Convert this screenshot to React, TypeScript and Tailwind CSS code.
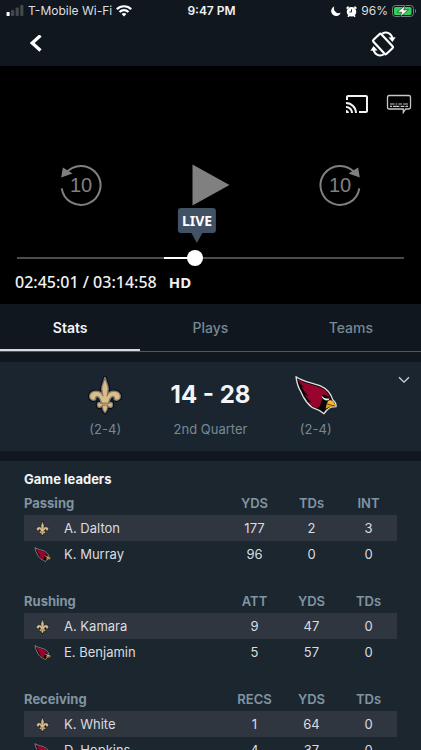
import React, { useState } from "react";
import { MdCast } from "react-icons/md";

type Leader = {
  team: "saints" | "cardinals";
  name: string;
  values: number[];
};

type Category = {
  title: string;
  columns: string[];
  leaders: Leader[];
};

const categories: Category[] = [
  {
    title: "Passing",
    columns: ["YDS", "TDs", "INT"],
    leaders: [
      { team: "saints", name: "A. Dalton", values: [177, 2, 3] },
      { team: "cardinals", name: "K. Murray", values: [96, 0, 0] },
    ],
  },
  {
    title: "Rushing",
    columns: ["ATT", "YDS", "TDs"],
    leaders: [
      { team: "saints", name: "A. Kamara", values: [9, 47, 0] },
      { team: "cardinals", name: "E. Benjamin", values: [5, 57, 0] },
    ],
  },
  {
    title: "Receiving",
    columns: ["RECS", "YDS", "TDs"],
    leaders: [
      { team: "saints", name: "K. White", values: [1, 64, 0] },
      { team: "cardinals", name: "D. Hopkins", values: [4, 37, 0] },
    ],
  },
];

const tabs = ["Stats", "Plays", "Teams"];

const FleurDeLis = ({ className }: { className?: string }) => {
  const shape =
    "M78 20 C76 34 69 42 69 54 C69 62 72 68 72 77 C69 68 61 62 50 62 C38 62 31 70 32 79 C33 87 42 91 49 86 C47 81 49 77 54 77 C63 78 65 89 68 98 L64 99 C61 95 55 97 56 102 C55 108 59 112 64 109 L71 107 C71 114 72 120 78 126 C84 120 85 114 85 107 L92 109 C97 112 101 108 100 102 C101 97 95 95 92 99 L88 98 C91 89 93 78 102 77 C107 77 109 81 107 86 C114 91 123 87 124 79 C125 70 118 62 106 62 C95 62 87 68 84 77 C84 68 87 62 87 54 C87 42 80 34 78 20 Z";
  return (
    <svg viewBox="26 12 104 122" className={className} aria-hidden="true">
      <path d={shape} fill="#080b0f" stroke="#080b0f" strokeWidth="12" strokeLinejoin="round" />
      <path d={shape} fill="#d7bc8a" stroke="#85827f" strokeWidth="6" strokeLinejoin="round" />
      <path d={shape} fill="#d9be8b" stroke="#3a3328" strokeWidth="1" />
      <path d="M67 98 H89 M67 104 H89" stroke="#4a3d29" strokeWidth="2" />
    </svg>
  );
};

const CardinalHead = ({ className }: { className?: string }) => (
  <svg viewBox="12 12 126 120" className={className} aria-hidden="true">
    <path
      d="M15 17 C34 32 68 36 91 46 C111 55 121 72 125 86 C133 92 136 100 135 107 L120 108 C111 113 104 119 99 128 C89 120 75 113 63 109 C50 99 42 87 36 76 L31 65 C22 51 17 35 15 17 Z"
      fill="#0b0708"
      stroke="#dedfe1"
      strokeWidth="4"
      strokeLinejoin="round"
    />
    <path
      d="M20 24 C38 38 66 41 88 50 C105 57 115 70 119 82 C111 73 99 70 91 72 C97 80 91 91 88 101 C85 108 80 112 73 110 C61 105 55 98 50 90 L63 96 C53 87 45 78 41 70 L54 77 C42 64 35 55 31 46 L42 52 C29 40 23 32 20 24 Z"
      fill="#97052f"
    />
    <path d="M91 73 C98 84 106 82 116 82 L113 87 C104 91 94 86 91 73 Z" fill="#f4f1ee" />
    <path d="M93 73 C101 73 111 77 116 84 C107 81 100 83 93 73 Z" fill="#0b0708" />
    <path d="M112 89 C122 84 131 93 133 105 L118 102 L107 98 Z" fill="#fdb626" />
    <path d="M107 99 L132 106 L116 107 L104 113 Z" fill="#eda31d" />
    <path d="M108 98 L131 105" stroke="#241306" strokeWidth="1.5" />
  </svg>
);

const TeamLogo = ({ team, className }: { team: Leader["team"]; className?: string }) =>
  team === "saints" ? <FleurDeLis className={className} /> : <CardinalHead className={className} />;

const SkipIcon = ({ forward }: { forward?: boolean }) => (
  <svg viewBox="0 0 44 44" className="h-11 w-11" fill="none" aria-hidden="true">
    <g transform={forward ? "translate(44 0) scale(-1 1)" : undefined}>
      <path d="M2.7 25.3 A19.5 19.5 0 1 0 6.8 10.2" stroke="#808080" strokeWidth="2" />
      <path d="M3.9 4.5 L13.5 10.6 L2.2 14.4 Z" fill="#808080" />
    </g>
    <text
      x="22"
      y="28.5"
      textAnchor="middle"
      fill="#808080"
      fontSize="20"
      fontFamily="'Liberation Sans', sans-serif"
    >
      10
    </text>
  </svg>
);

const StatusBar = () => (
  <div className="grid h-[22px] grid-cols-[1fr_auto_1fr] items-center pl-1.5 pr-1 text-[12px] leading-5 text-[#dcdfe1]">
    <div className="flex items-center gap-1">
      <svg viewBox="0 0 18 12" className="h-3 w-[18px]" aria-hidden="true">
        <rect x="0.5" y="7" width="3.2" height="4" rx="0.8" fill="#fff" />
        <rect x="5" y="5" width="3.2" height="6" rx="0.8" fill="#41484e" />
        <rect x="9.6" y="2.5" width="3.2" height="8.5" rx="0.8" fill="#41484e" />
        <rect x="14.2" y="0" width="3.2" height="11" rx="0.8" fill="#41484e" />
      </svg>
      <span>T-Mobile Wi-Fi</span>
      <svg viewBox="0 0 16 12" className="h-3 w-4" fill="none" stroke="#fff" strokeWidth="2.1" aria-hidden="true">
        <path d="M0.8 4.3 C4.8 0.3 11.2 0.3 15.2 4.3" />
        <path d="M3.5 7 C6 4.5 10 4.5 12.5 7" />
        <path d="M5.6 9 C7 7.7 9 7.7 10.4 9 L8 11.4 Z" fill="#fff" stroke="none" />
      </svg>
    </div>
    <span className="font-semibold text-[#f0f1f2]">9:47 PM</span>
    <div className="flex items-center justify-end gap-1">
      <svg viewBox="0 0 10 10" className="h-2.5 w-2.5" aria-hidden="true">
        <path d="M3.4 0.3 A5 5 0 1 0 9.8 6.8 A4.9 4.9 0 0 1 3.4 0.3 Z" fill="#fff" />
      </svg>
      <svg viewBox="0 0 11 11" className="ml-px h-[11px] w-[11px]" aria-hidden="true">
        <path d="M0.6 2.6 L2.6 0.7 M10.4 2.6 L8.4 0.7 M2 10.8 L3 9.5 M9 10.8 L8 9.5" stroke="#fff" strokeWidth="1.6" />
        <circle cx="5.5" cy="5.8" r="4.8" fill="#fff" />
        <path d="M5.5 3.2 V6 H3.4" stroke="#10171e" strokeWidth="0.9" fill="none" />
      </svg>
      <span>96%</span>
      <svg viewBox="0 0 25 12" className="h-3 w-[25px]" aria-hidden="true">
        <rect x="0.5" y="0.5" width="21" height="11" rx="3" fill="none" stroke="#737a80" />
        <rect x="2" y="2" width="17.5" height="8" rx="1.6" fill="#30d158" />
        <path d="M23 4 C24.6 4.8 24.6 7.2 23 8 Z" fill="#737a80" />
        <path
          d="M13.4 0.2 L5.2 7.2 H9.8 L8 11.9 L16.4 4.9 H11.7 Z"
          fill="#fff"
          stroke="#10171e"
          strokeWidth="0.6"
        />
      </svg>
    </div>
  </div>
);

const Header = () => (
  <header className="flex h-11 items-center justify-between px-6">
    <button aria-label="Back" className="flex h-6 w-6 items-center justify-center">
      <svg viewBox="0 0 12 18" className="h-[18px] w-3" aria-hidden="true">
        <path d="M10.5 0.5 L2.2 8 L10.5 15.5" fill="none" stroke="#fff" strokeWidth="3.2" />
      </svg>
    </button>
    <button aria-label="Rotate screen" className="flex h-7 w-7 items-center justify-center">
      <svg viewBox="0 0 26 26" className="h-[26px] w-[26px]" fill="none" stroke="#fff" aria-hidden="true">
        <rect x="3.4" y="7.6" width="19.2" height="10.8" rx="1.4" strokeWidth="2.2" transform="rotate(47 13 13)" />
        <path d="M12.2 2.6 C17.2 0 21.8 3 22.4 7.6" strokeWidth="2" />
        <path d="M18.4 6.6 L25.6 6.3 L22.5 11 Z" fill="#fff" stroke="none" />
        <path d="M13.8 23.4 C8.8 26 4.2 23 3.6 18.4" strokeWidth="2" />
        <path d="M7.6 19.4 L0.4 19.7 L3.5 15 Z" fill="#fff" stroke="none" />
      </svg>
    </button>
  </header>
);

const Player = () => {
  const [position, setPosition] = useState(457);

  return (
    <section className="bg-black pt-[26px] pb-3">
      <div className="flex items-center justify-end gap-[17px] pr-[9px]">
        <button aria-label="Cast" className="flex h-6 w-6 items-center justify-center text-[#f2f2f2]">
          <MdCast size={24} />
        </button>
        <button aria-label="Subtitles" className="flex h-6 w-[26px] items-center justify-center">
          <svg viewBox="0 0 26 20" className="h-5 w-[26px]" fill="none" stroke="#c8c8c8" aria-hidden="true">
            <path
              d="M3.2 1.5 H22.8 Q24.5 1.5 24.5 3.2 V13.3 Q24.5 15 22.8 15 H19.6 L17.3 18.5 V15 H3.2 Q1.5 15 1.5 13.3 V3.2 Q1.5 1.5 3.2 1.5 Z"
              strokeWidth="1.3"
            />
            <path d="M4 10 H8.5 M9.6 10 H11.2 M12.4 10 H16 M17.2 10 H22" strokeWidth="1" />
            <path d="M4 12.3 H6 M7 12.3 H13.4 M14.6 12.3 H18.4 M19.4 12.3 H22" strokeWidth="1.2" />
          </svg>
        </button>
      </div>

      <div className="mt-[47px] flex items-center justify-between px-[14%]">
        <button aria-label="Back 10 seconds">
          <SkipIcon />
        </button>
        <button aria-label="Play">
          <svg viewBox="0 0 38 42" className="h-[42px] w-[38px]" aria-hidden="true">
            <path d="M0.5 0.5 L37.5 21 L0.5 41.5 Z" fill="#808080" />
          </svg>
        </button>
        <button aria-label="Forward 10 seconds">
          <SkipIcon forward />
        </button>
      </div>

      <div className="relative mx-[17px] mt-[43px] h-4">
        <div className="absolute inset-x-0 top-[7px] h-0.5 bg-[#4c4c4c]" />
        <div className="absolute left-[38%] top-[7px] h-0.5 w-[8%] bg-white" />
        <div className="absolute bottom-[23px] left-[46%] flex -translate-x-1/2 flex-col items-center pl-1">
          <span className="rounded-[3px] bg-[#425265] px-1 font-['Noto_Sans'] text-[14px] leading-[25px] font-bold text-white">
            LIVE
          </span>
          <svg viewBox="0 0 12 10" className="h-2.5 w-3" aria-hidden="true">
            <path d="M0.5 0 H11.5 L6 10 Z" fill="#425265" />
          </svg>
        </div>
        <input
          type="range"
          aria-label="Seek"
          min={0}
          max={1000}
          value={position}
          onChange={(e) => setPosition(Number(e.target.value))}
          className="absolute inset-0 m-0 h-4 w-full appearance-none bg-transparent [&::-webkit-slider-thumb]:h-4 [&::-webkit-slider-thumb]:w-4 [&::-webkit-slider-thumb]:appearance-none [&::-webkit-slider-thumb]:rounded-full [&::-webkit-slider-thumb]:bg-white"
        />
      </div>

      <div className="mt-1.5 flex items-center gap-3 px-[15px] font-['Noto_Sans'] leading-5 text-[#f0f0f0]">
        <span className="text-[16px] font-medium">02:45:01 / 03:14:58</span>
        <span className="text-[15px] font-bold">HD</span>
      </div>
    </section>
  );
};

const Scoreboard = () => (
  <section className="my-2.5 grid h-[89px] shrink-0 grid-cols-[1fr_2fr_2fr_2fr_1fr] bg-[#1a2530] pt-[13px] text-center text-[13px] leading-5 text-[#768995]">
    <div />
    <div className="flex flex-col items-center">
      <FleurDeLis className="h-10 w-[34px]" />
      <span className="mt-1">(2-4)</span>
    </div>
    <div className="flex flex-col items-center">
      <span className="text-[24px] leading-10 font-bold whitespace-nowrap text-[#f4f5f6]">14 - 28</span>
      <span className="mt-1 whitespace-nowrap">2nd Quarter</span>
    </div>
    <div className="flex flex-col items-center">
      <CardinalHead className="h-10 w-[42px]" />
      <span className="mt-1">(2-4)</span>
    </div>
    <div className="flex items-start justify-end pr-[11px]">
      <button aria-label="Expand score" className="flex h-[10px] w-3 items-center justify-center">
        <svg viewBox="0 0 12 8" className="h-2 w-3" aria-hidden="true">
          <path d="M1 1.2 L6 6.2 L11 1.2" fill="none" stroke="#d3d7da" strokeWidth="1.3" />
        </svg>
      </button>
    </div>
  </section>
);

const LeaderTable: React.FC<{ category: Category }> = ({ category }) => (
  <table className="mb-[22px] w-full table-fixed border-collapse text-[13px] leading-5">
    <colgroup>
      <col className="w-10" />
      <col />
      <col className="w-[57px]" />
      <col className="w-[57px]" />
      <col className="w-[57px]" />
    </colgroup>
    <thead>
      <tr className="h-6 text-[#8095a2]">
        <th colSpan={2} className="p-0 text-left font-bold">
          {category.title}
        </th>
        {category.columns.map((col) => (
          <th key={col} className="p-0 text-center font-semibold">
            {col}
          </th>
        ))}
      </tr>
    </thead>
    <tbody>
      {category.leaders.map((leader) => (
        <tr key={leader.name} className="h-[26px] text-[#dadde0] odd:bg-[#303640]">
          <td className="p-0">
            <div className="flex w-9 justify-center">
              <TeamLogo team={leader.team} className="h-[15px] w-[17px]" />
            </div>
          </td>
          <td className="p-0 whitespace-nowrap">{leader.name}</td>
          {leader.values.map((value, i) => (
            <td key={i} className="p-0 text-center">
              {value}
            </td>
          ))}
        </tr>
      ))}
    </tbody>
  </table>
);

const App = () => {
  const [activeTab, setActiveTab] = useState("Stats");

  return (
    <main className="flex h-screen flex-col bg-[#10171e] font-['Inter',sans-serif]">
      <StatusBar />
      <Header />
      <Player />
      <nav className="grid h-12 shrink-0 grid-cols-3 border-b border-[#4b5c67]">
        {tabs.map((tab) => (
          <button
            key={tab}
            onClick={() => setActiveTab(tab)}
            className={
              tab === activeTab
                ? "border-b-2 border-[#d5dadd] pt-0.5 text-[14px] font-semibold text-[#f4f5f6]"
                : "border-b-2 border-transparent pt-0.5 text-[14px] font-medium text-[#768995]"
            }
          >
            {tab}
          </button>
        ))}
      </nav>
      <Scoreboard />
      <section className="min-h-0 flex-1 overflow-y-auto bg-[#1c262f] px-6 pt-1.5 [scrollbar-width:none]">
        <h2 className="text-[13px] leading-6 font-bold text-[#f4f5f6]">Game leaders</h2>
        {categories.map((category) => (
          <LeaderTable key={category.title} category={category} />
        ))}
      </section>
    </main>
  );
};

export default App;
